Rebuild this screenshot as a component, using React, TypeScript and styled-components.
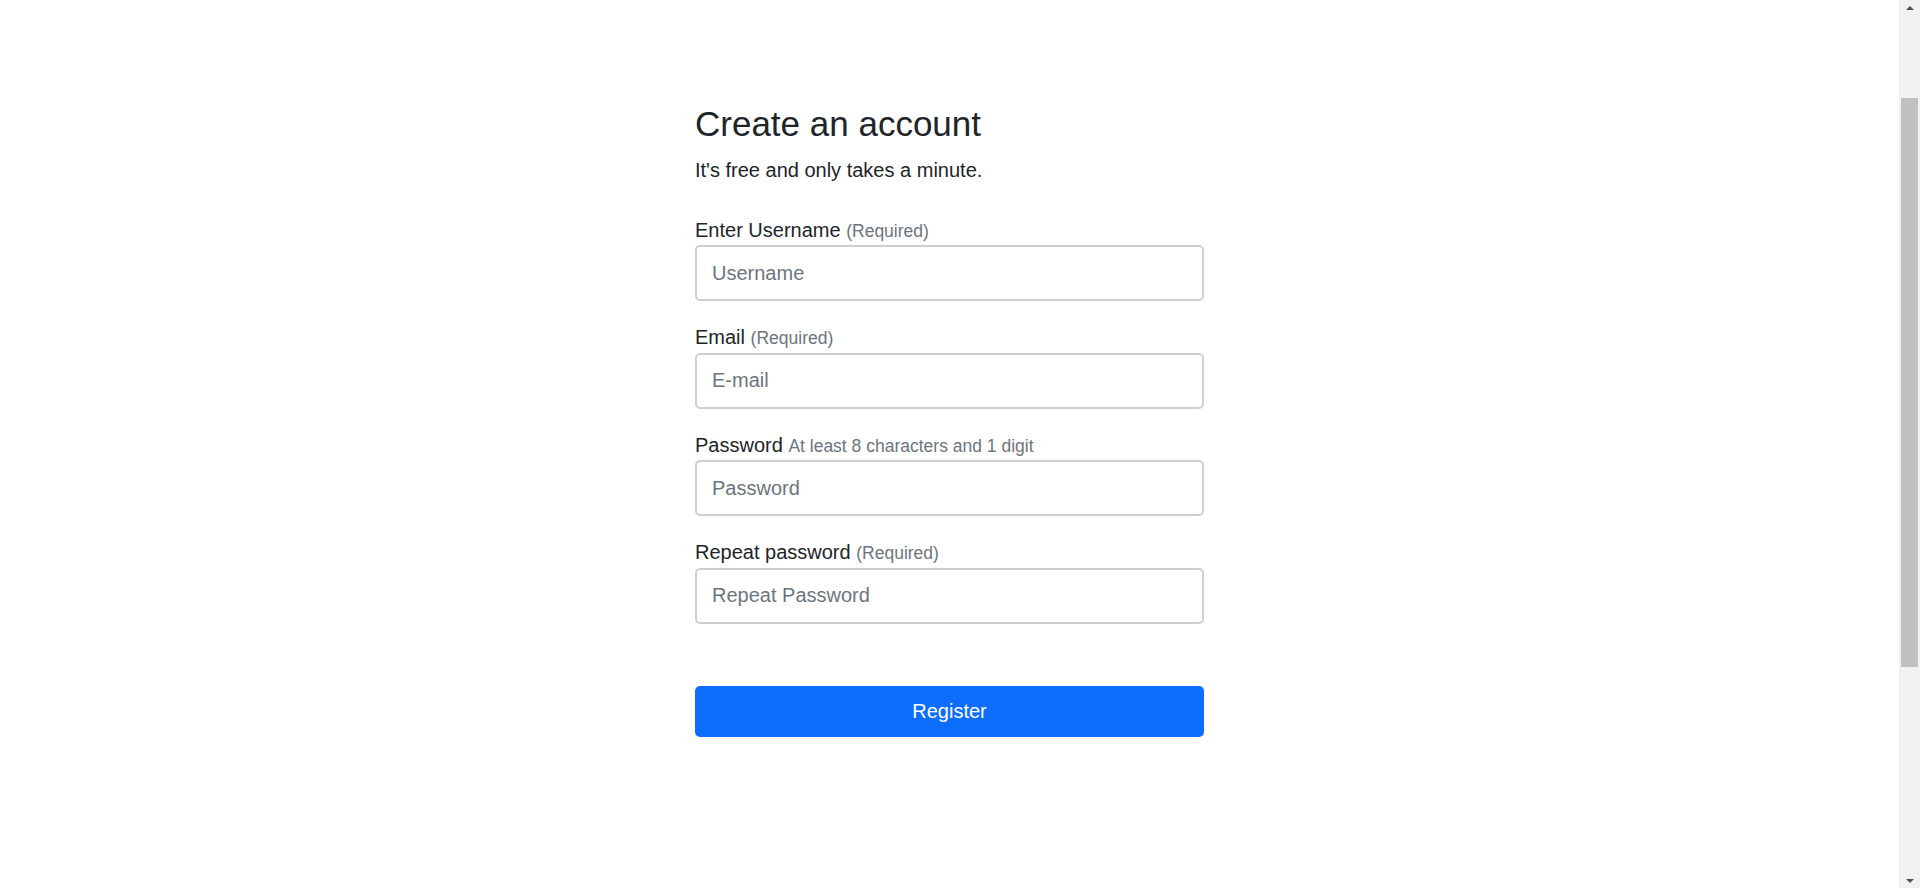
import React from "react";
import styled, { createGlobalStyle } from "styled-components";

const GlobalStyle = createGlobalStyle`
  html, body {
    margin: 0;
    padding: 0;
    background: #ffffff;
  }
  body {
    font-family: "Liberation Sans", Arial, sans-serif;
    color: #212529;
    -webkit-font-smoothing: antialiased;
  }
  *, *::before, *::after {
    box-sizing: border-box;
  }
`;

const Shell = styled.div`
  display: grid;
  grid-template-columns: 1fr 21px;
  height: 100vh;
  overflow: hidden;
`;

const Page = styled.main`
  background: #ffffff;
  min-width: 0;
`;

const Rail = styled.div`
  height: 100vh;
  background: #f1f1f1;
  display: flex;
  flex-direction: column;
`;

const ArrowButton = styled.div<{ $dir: "up" | "down" }>`
  height: 17px;
  display: flex;
  align-items: center;
  justify-content: center;
  padding-top: ${(p) => (p.$dir === "up" ? "0" : "2px")};
  padding-bottom: ${(p) => (p.$dir === "up" ? "2px" : "0")};

  &::before {
    content: "";
    width: 0;
    height: 0;
    border-left: 4.5px solid transparent;
    border-right: 4.5px solid transparent;
    ${(p) =>
      p.$dir === "up"
        ? "border-bottom: 4.5px solid #505050;"
        : "border-top: 4.5px solid #505050;"}
  }
`;

const Track = styled.div`
  flex: 1;
  padding: 0 2px;
`;

const Thumb = styled.div`
  margin-top: 81px;
  height: 569px;
  background: #c1c1c1;
`;

const Form = styled.form`
  width: 509px;
  margin: 0 auto;
  padding-top: 102.5px;
  display: flex;
  flex-direction: column;
`;

const Title = styled.h1`
  margin: 0 0 10px;
  font-size: 35px;
  line-height: 42px;
  font-weight: 400;
  color: #212529;
`;

const Subtitle = styled.p`
  margin: 0 0 29px;
  font-size: 20px;
  line-height: 30px;
  color: #212529;
`;

const Field = styled.div`
  display: flex;
  flex-direction: column;
  margin-bottom: 20px;
`;

const Label = styled.label`
  display: block;
  height: 31px;
  padding-top: 1px;
  font-size: 20px;
  line-height: 30px;
  margin-bottom: 0.5px;
  color: #212529;
`;

const Hint = styled.span`
  font-size: 17.5px;
  line-height: 20px;
  color: #6c757d;
`;

const Input = styled.input`
  width: 100%;
  height: 56px;
  padding: 0 15px;
  border: 2px solid #cfcfcf;
  border-radius: 5px;
  font-family: "Liberation Sans", Arial, sans-serif;
  font-size: 20px;
  line-height: 30px;
  color: #212529;
  background: #ffffff;
  outline: none;

  &::placeholder {
    color: #6c757d;
    opacity: 1;
  }
`;

const Submit = styled.button`
  margin-top: 42px;
  width: 100%;
  height: 51px;
  border: none;
  border-radius: 5px;
  background: #0d6efd;
  color: #ffffff;
  font-family: "Liberation Sans", Arial, sans-serif;
  font-size: 20px;
  line-height: 30px;
  cursor: pointer;
`;

type FieldDef = {
  id: string;
  label: string;
  hint: string;
  placeholder: string;
  type: string;
};

const fields: FieldDef[] = [
  { id: "username", label: "Enter Username", hint: "(Required)", placeholder: "Username", type: "text" },
  { id: "email", label: "Email", hint: "(Required)", placeholder: "E-mail", type: "email" },
  { id: "password", label: "Password", hint: "At least 8 characters and 1 digit", placeholder: "Password", type: "password" },
  { id: "repeat", label: "Repeat password", hint: "(Required)", placeholder: "Repeat Password", type: "password" },
];

export default function App() {
  return (
    <>
      <GlobalStyle />
      <Shell>
        <Page>
          <Form onSubmit={(e) => e.preventDefault()}>
            <Title>Create an account</Title>
            <Subtitle>It's free and only takes a minute.</Subtitle>
            {fields.map((f) => (
              <Field key={f.id}>
                <Label htmlFor={f.id}>
                  {f.label} <Hint>{f.hint}</Hint>
                </Label>
                <Input id={f.id} type={f.type} placeholder={f.placeholder} />
              </Field>
            ))}
            <Submit type="submit">Register</Submit>
          </Form>
        </Page>
        <Rail aria-hidden="true">
          <ArrowButton $dir="up" />
          <Track>
            <Thumb />
          </Track>
          <ArrowButton $dir="down" />
        </Rail>
      </Shell>
    </>
  );
}
